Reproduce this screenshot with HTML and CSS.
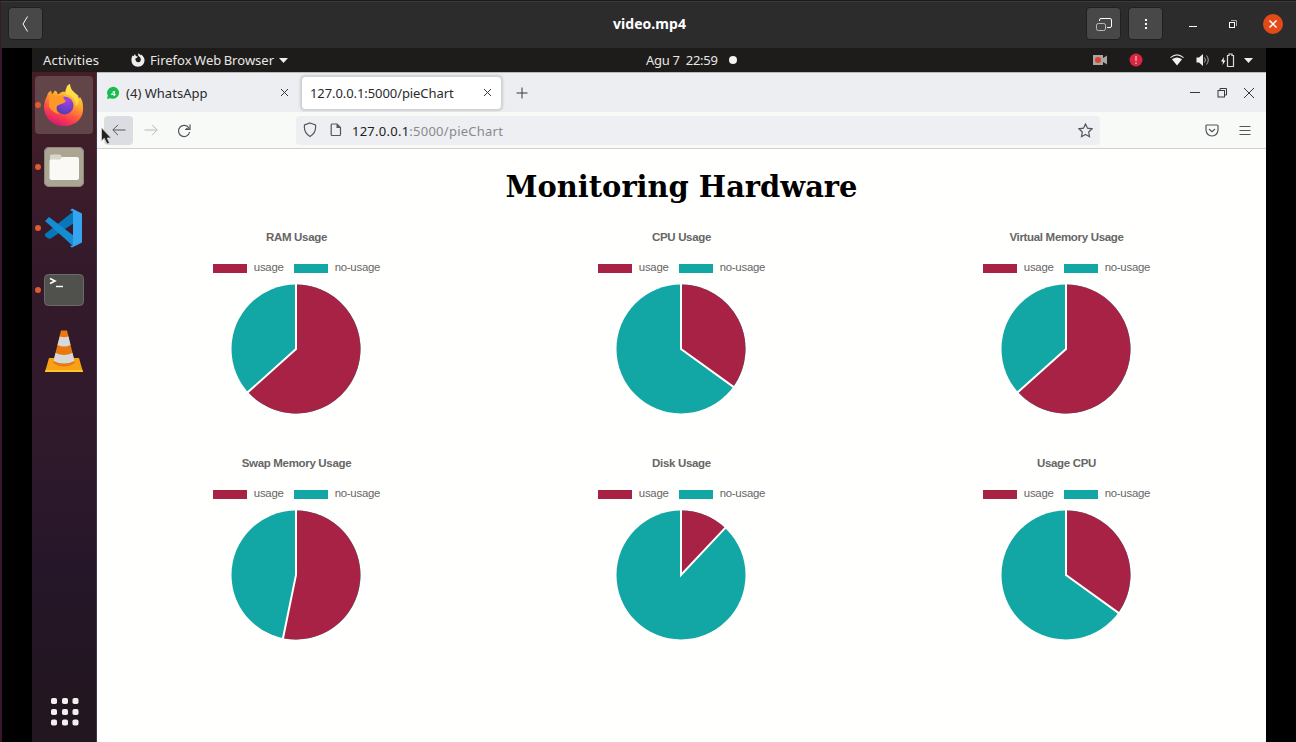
FILE: index.html
```html
<!DOCTYPE html>
<html lang="en">
<head>
<meta charset="utf-8">
<title>video.mp4</title>
<link rel="stylesheet" href="styles.css">
</head>
<body>
<div class="player">
  <header class="titlebar">
    <div class="title-left"><button class="tool" aria-label="Back"><svg width="33" height="32" viewBox="0 0 33 32"><path d="M18.500 8.500l-4.500 7.500 4.500 7.500" class="line light"/></svg></button></div>
    <div class="title">video.mp4</div>
    <div class="title-right">
      <button class="tool" aria-label="Picture in picture"><svg width="33" height="32" viewBox="0 0 33 32" class="line light"><path d="M12.500 13v-1q0-1.500 1.500-1.500h9q1.500 0 1.500 1.500v6q0 1.500-1.500 1.500h-3"/><rect x="9.500" y="15.500" width="9" height="7" rx="1.800" stroke="#bbb"/></svg></button>
      <button class="tool menu" aria-label="Menu"><svg width="33" height="32" viewBox="0 0 33 32" fill="#fff"><path d="M16 11h2v2h-2zM16 15h2v2h-2zM16 19h2v2h-2z"/></svg></button>
      <svg class="win-min" width="12" height="14"><path d="M2 9.500h8" class="line light"/></svg>
      <svg class="win-max" width="12" height="14" viewBox="0 0 12 14"><path d="M4 3.500h5.500V9" fill="none" stroke="#aaa"/><rect x="2.500" y="5.500" width="5" height="5" class="line light"/></svg>
      <svg class="win-close" width="20" height="20" viewBox="0 0 20 20"><circle cx="10" cy="10" r="10" fill="#e24a17"/><path d="M6.500 6.500l7 7m0-7l-7 7" stroke="#fff" stroke-width="1.500"/></svg>
    </div>
  </header>
  <div class="stage">
    <div class="desktop">
      <div class="topbar">
        <span class="activities">Activities</span>
        <svg class="app-icon" width="14" height="14" viewBox="0 0 14 14"><path d="M1.500 2.500l1 .7L4 1l.8 2 2.300.8-1.600 1.300-1.200.5Q4.500 9.500 7.500 9.300 10 8.800 9.800 6 9.500 4 7.300 2.700L7 .2Q9 1 9.600 2.200L10 1.500Q13.500 4 13.600 7.500 13 13.500 7 13.700.8 13.500.4 7.500.4 4.500 1.500 2.500z" fill="#eee"/></svg>
        <span class="app-name">Firefox Web Browser</span>
        <svg class="caret" width="9" height="5"><path d="M0 0h9l-4.500 5z" fill="#eee"/></svg>
        <span class="clock">Agu 7&nbsp; 22:59</span><span class="notice"></span>
        <div class="status">
          <svg width="14" height="10" viewBox="0 0 14 10"><path d="M0 0h10v3l4-2.500v9L10 7v3H0z" fill="#a9a5a1"/><circle cx="5" cy="5" r="3" fill="#dc4234"/></svg>
          <svg class="alert" width="14" height="14" viewBox="0 0 14 14"><circle cx="7" cy="7" r="6.500" fill="#d92742"/><path d="M7 3v5M7 9.500v1.500" stroke="#f3bdc4" stroke-width="1.300"/></svg>
          <svg class="wifi" width="14" height="12" viewBox="0 0 14 12"><path d="M.5 3.600Q7-1.800 13.500 3.600" fill="none" stroke="#ddd" stroke-width="1.200"/><path d="M2 5.200Q7 1.600 12 5.200L7 11.500z" fill="#f4f4f4"/></svg>
          <svg class="sound" width="14" height="12" viewBox="0 0 14 12"><path d="M.5 3.500H3L7 0v12L3 8.500H.5z" fill="#eee"/><path d="M8.500 3.500q2 2.500 0 5M10.500 1.500q3.500 4.500 0 9" fill="none" stroke="#aaa"/></svg>
          <svg class="battery" width="14" height="15" viewBox="0 0 14 15"><path d="M3 4L0 8.500h2L1.500 12 4.500 7.500h-2z" fill="#fff"/><path d="M6.500 2.500H8V1h3v1.500h1.500v11h-6z" fill="none" stroke="#ddd" stroke-width="1.200"/></svg>
          <svg width="9" height="5"><path d="M0 0h9l-4.500 5z" fill="#eee"/></svg>
        </div>
      </div>
      <div class="workspace">
        <nav class="dock">
          <div class="launcher active running"><svg width="42" height="44" viewBox="0 0 42 44">
            <defs><linearGradient id="fox" x1=".75" y1="0" x2=".3" y2="1"><stop offset="0" stop-color="#fff04b"/><stop offset=".4" stop-color="#ffa42a"/><stop offset=".72" stop-color="#ff4547"/><stop offset="1" stop-color="#d51476"/></linearGradient><radialGradient id="globe" cx=".65" cy=".2" r=".9"><stop offset="0" stop-color="#a641e7"/><stop offset="1" stop-color="#4a3dad"/></radialGradient></defs>
            <path d="M4 13Q5 9 8 7.500l1 4 3-4q2 .5 3 4 5-4 7-2.500l2-6q2-2 3-2 .3 5 4 8 3 3 4.500 7l1.500-2q3 4 3 10C41 35 33 43 21 43S1 34 1 23.500Q1 18 4 13z" fill="url(#fox)"/><circle cx="21.500" cy="22.500" r="9" fill="url(#globe)"/><path d="M6 15q5-4 10-1.500 2-2 5-1-1 2 0 3.500 3 2 0 4-4 1-7 3-2 5 3 8-7-1-11-7z" fill="#ff9829"/><path d="M26 3q-4 4-3 8 9 2 10 12 5-4 2-11-6-3-9-9z" fill="#ffe14d" opacity=".8"/></svg></div>
          <div class="launcher running"><svg width="42" height="42" viewBox="0 0 42 42"><rect x="1" y="1" width="40" height="40" rx="5" fill="#aaa693"/><rect x="1.500" y="1.500" width="39" height="39" rx="5" fill="none" stroke="#8c8879"/><path d="M7 14v-4q0-1.500 1.500-1.500H17l2.500 3H34l2 2z" fill="#d8d5c9"/><path d="M6.500 15q0-1.500 1.500-1.500h9l2.500-2.500H34q2 0 2 2v19q0 2-2 2H8.500q-2 0-2-2z" fill="#faf9f5"/></svg></div>
          <div class="launcher running"><svg width="42" height="42" viewBox="0 0 42 42"><path d="M2 27L31 4v12L7 32q-2 0-5-3z" fill="#0877b9"/><path d="M2 14l4-4 25 19-1 10z" fill="#168dd1"/><path d="M29 1.500l10 5v29l-10 5q-1 0-2-2 3 1 3-1V5q-.3-2-3-1z" fill="#35a5ef"/></svg></div>
          <div class="launcher running"><svg width="42" height="42" viewBox="0 0 42 42"><rect x="1.500" y="5.500" width="39" height="31" rx="4" fill="#50504d" stroke="#6c6b68"/><path d="M7 9.500l5 2.500-5 2.500" fill="none" stroke="#fff" stroke-width="1.600"/><path d="M13 17.500h7" stroke="#fff" stroke-width="1.400"/></svg></div>
          <div class="launcher"><svg width="42" height="44" viewBox="0 0 42 44"><path d="M6 29h30l4 14H2z" fill="#f7a116"/><path d="M2.500 41h37l.5 2H2z" fill="#ffc629"/><path d="M18 1.500h6L32 34q-11 7-22 0z" fill="#e9790e"/><path d="M16.800 7.500Q21 9 25.500 7.500L27.500 16Q21 19 14.500 16zM12.500 24Q21 28 29.500 24L31.500 32Q21 37 10.500 32z" fill="#d6d8d9"/></svg></div>
          <svg class="apps" width="30" height="30" viewBox="0 0 30 30" fill="#f3eff1"><g id="dots"><rect x="1" y="1" width="6" height="6" rx="1.800"/><rect x="12" y="1" width="6" height="6" rx="1.800"/><rect x="22.500" y="1" width="6" height="6" rx="1.800"/></g><use href="#dots" y="11"/><use href="#dots" y="21.500"/></svg>
        </nav>
        <main class="browser">
          <div class="tabs">
            <div class="tab"><svg width="14" height="14" viewBox="0 0 14 14"><path d="M1 13l.8-3.400a6 6 0 1 1 2.700 2.600z" fill="#1abc4c"/><text x="7.200" y="10.200" class="badge">4</text></svg><span class="tab-name whatsapp">(4) WhatsApp</span><svg class="close" width="9" height="9"><path d="M1 1l7 7M8 1L1 8" class="line dark"/></svg></div>
            <div class="tab selected"><span class="tab-name local">127.0.0.1:5000/pieChart</span><svg class="close" width="9" height="9"><path d="M1 1l7 7M8 1L1 8" class="line dark"/></svg></div>
            <svg class="plus" width="12" height="12"><path d="M6 .5v11M.5 6h11" class="line dark"/></svg>
            <div class="controls"><svg width="10" height="12"><path d="M0 5.500h10" class="line dark"/></svg><svg width="12" height="12" viewBox="0 0 12 12"><path d="M4 3V1.500h6.500V8H9" class="line dark"/><rect x="2" y="3.500" width="6.500" height="6.500" class="line dark"/></svg><svg width="12" height="12"><path d="M1 1l10 10M11 1L1 11" class="line dark"/></svg></div>
          </div>
          <div class="toolbar">
            <div class="back"><svg width="14" height="12"><path d="M13.500 6H1M6 .8L.8 6 6 11.200" class="line grey"/></svg></div>
            <svg class="forward" width="14" height="12"><path d="M.5 6H13M8 .8L13.200 6 8 11.200" class="line pale"/></svg>
            <svg class="reload" width="14" height="14" viewBox="0 0 14 14"><path d="M12 4.200A5.600 5.600 0 1 0 12.600 8" class="line grey thick"/><path d="M13 .5v5H8M12.500 5L9 4.500" class="line grey thick"/></svg>
            <div class="address"><svg class="shield" width="14" height="16" viewBox="0 0 14 16"><path d="M7 1l5.500 2Q13.500 10.500 7 14.500.5 10.500 1.500 3z" class="line grey thick"/></svg><svg class="page-icon" width="12" height="14" viewBox="0 0 12 14"><path d="M2 1h5l3.500 3.500v7q0 1-1 1H2q-.8 0-.8-1V2Q1.200 1 2 1z" class="line grey thick"/><path d="M6.500 1v4h4z" fill="#55555d"/></svg><span class="url"><b>127.0.0.1</b>:5000/pieChart</span><svg class="star" width="15" height="15" viewBox="0 0 15 15"><path d="M7.500 1l2 4.200 4.500.6-3.300 3.200.8 4.700-4-2.200-4 2.200.8-4.700L1 5.800l4.500-.6z" class="line grey thick"/></svg></div>
            <div class="actions"><svg width="14" height="13" viewBox="0 0 14 13"><path d="M2 1h10q1 0 1 1v4Q12.500 11.500 7 12 1.500 11.500 1 6V2q0-1 1-1zM4 5l3 2.800L10 5" class="line grey thick"/></svg><svg width="12" height="13"><path d="M.5 2.500h11M.5 6.500h11M.5 10.500h11" class="line grey"/></svg></div>
            <svg class="pointer" width="11" height="18" viewBox="0 0 11 18"><path d="M.5.800v13l2.800-2.500L6 17l2.500-1-2.300-5h4z" fill="#222" stroke="#d5d5d5" stroke-width=".8"/></svg>
          </div>
          <section class="page">
            <h1>Monitoring Hardware</h1>
            <div class="charts">
              <article class="chart"><h2>RAM Usage</h2><div class="legend"><i class="used"></i><span>usage</span><i class="free"></i><span>no-usage</span></div><svg class="pie" viewBox="-67 -67 134 134"><circle r="64.500"/><path class="slice" d="M0 0V-64.500A64.500 64.500 0 1 1-48 43.100z"/><path class="split" d="M0-66V0L-49.100 44.100"/></svg></article>
              <article class="chart"><h2>CPU Usage</h2><div class="legend"><i class="used"></i><span>usage</span><i class="free"></i><span>no-usage</span></div><svg class="pie" viewBox="-67 -67 134 134"><circle r="64.500"/><path class="slice" d="M0 0V-64.500A64.500 64.500 0 0 1 52.300 37.700z"/><path class="split" d="M0-66V0L53.500 38.600"/></svg></article>
              <article class="chart"><h2>Virtual Memory Usage</h2><div class="legend"><i class="used"></i><span>usage</span><i class="free"></i><span>no-usage</span></div><svg class="pie" viewBox="-67 -67 134 134"><circle r="64.500"/><path class="slice" d="M0 0V-64.500A64.500 64.500 0 1 1-48 43.100z"/><path class="split" d="M0-66V0L-49.100 44.100"/></svg></article>
              <article class="chart"><h2>Swap Memory Usage</h2><div class="legend"><i class="used"></i><span>usage</span><i class="free"></i><span>no-usage</span></div><svg class="pie" viewBox="-67 -67 134 134"><circle r="64.500"/><path class="slice" d="M0 0V-64.500A64.500 64.500 0 1 1-13 63.200z"/><path class="split" d="M0-66V0L-13.300 64.700"/></svg></article>
              <article class="chart"><h2>Disk Usage</h2><div class="legend"><i class="used"></i><span>usage</span><i class="free"></i><span>no-usage</span></div><svg class="pie" viewBox="-67 -67 134 134"><circle r="64.500"/><path class="slice" d="M0 0V-64.500A64.500 64.500 0 0 1 44.200-47z"/><path class="split" d="M0-66V0L45.200-48.100"/></svg></article>
              <article class="chart"><h2>Usage CPU</h2><div class="legend"><i class="used"></i><span>usage</span><i class="free"></i><span>no-usage</span></div><svg class="pie" viewBox="-67 -67 134 134"><circle r="64.500"/><path class="slice" d="M0 0V-64.500A64.500 64.500 0 0 1 52.300 37.700z"/><path class="split" d="M0-66V0L53.500 38.600"/></svg></article>
            </div>
          </section>
        </main>
      </div>
    </div>
  </div>
</div>
</body>
</html>
```
FILE: styles.css
```css
* { box-sizing: border-box; }
body { margin: 0; overflow: hidden; font: 13px "Noto Sans", "Open Sans", sans-serif; }
svg { display: block; flex: none; }
span { white-space: nowrap; }
.line { fill: none; stroke-width: 1; }
.light { stroke: #fff; }
.dark { stroke: #38383c; }
.grey { stroke: #55555d; }
.pale { stroke: #b7b8bb; }
.thick { stroke-width: 1.2; }
.player { width: 1296px; height: 742px; display: flex; flex-direction: column; background: #000; }
.titlebar { height: 48px; display: grid; grid-template-columns: 1fr auto 1fr; align-items: center; background: #2c2c2c; border-top: 1px solid #191919; box-shadow: inset 0 1px #3b3b3b; padding: 0 0 2px 2px; border-left: 1px solid #3b1c24; }
.title { color: #fff; font-weight: 700; font-size: 14px; letter-spacing: .05px; }
.title-left { padding-left: 7px; }
.title-right { display: flex; align-items: center; justify-content: flex-end; padding-right: 13px; }
.tool { display: block; width: 35px; height: 33px; padding: 0; border: 1px solid #202020; border-radius: 4px; background: #484848; }
.title-left .tool { margin-left: -2px; }
.menu { margin-left: 7px; }
.win-min { margin-left: 24px; }
.win-max { margin-left: 28px; }
.win-close { margin-left: 24px; }
.title-right .tool:first-child { margin-left: auto; }
.stage { flex: 1; min-height: 0; border-left: 2px solid #35182b; padding: 0 30px; display: flex; }
.desktop { flex: 1; display: flex; flex-direction: column; min-width: 0; }
.topbar { height: 24px; display: flex; align-items: center; background: #1d1c1a; color: #e8e7e5; padding: 0 13px 0 11px; }
.activities { width: 87px; letter-spacing: .2px; }
.app-icon { margin: 0 5px 0 1px; }
.app-name { width: 125px; letter-spacing: .02px; word-spacing: -1px; }
.caret { margin-left: 4px; }
.clock { margin-left: 358px; width: 73px; letter-spacing: -.3px; }
.notice { width: 8px; height: 8px; border-radius: 50%; background: #f3f3f3; margin-left: 10px; }
.status { display: flex; align-items: center; margin-left: auto; }
.alert { margin-left: 22px; }
.wifi { margin-left: 27px; }
.sound { margin-left: 12px; }
.battery { margin: 0 9px 0 11px; }
.workspace { flex: 1; min-height: 0; display: flex; }
.dock { width: 65px; padding: 4px 3px 0; display: flex; flex-direction: column; gap: 3px; background: linear-gradient(#451e28, #331a2b 30%, #311a2c 50%, #261629 75%, #21161e); border-right: 1px solid #44334a; }
.launcher { width: 58px; height: 58px; margin-bottom: .6px; border-radius: 4px; display: flex; align-items: center; justify-content: center; position: relative; }
.active { background: #624549; }
.running::before { content: ""; position: absolute; left: 0; top: 26px; width: 6px; height: 6px; border-radius: 50%; background: #dd5b2c; }
.apps { margin: auto 14px 15.5px 14.5px; }
.browser { flex: 1; min-width: 0; display: flex; flex-direction: column; background: #fff; }
.tabs { height: 40px; background: #edeef1; display: flex; align-items: center; padding-left: 9px; border-top: 1px solid #b9babc; }
.tab { height: 34px; display: flex; align-items: center; width: 192px; color: #292a2e; }
.badge { font: bold 8px "Liberation Sans", sans-serif; text-anchor: middle; fill: #fff; }
.whatsapp { margin-left: 6px; letter-spacing: .02px; }
.close { margin-left: auto; }
.tab:first-child { padding-right: 9.5px; }
.selected { width: 201px; margin-left: 3px; padding: 0 9.5px 0 8px; border: 1px solid #d1d2d5; border-radius: 4px; background: #fff; box-shadow: 0 0 3px #aaa; }
.local { letter-spacing: -.08px; }
.plus { margin-left: 13.500px; }
.controls { display: flex; align-items: center; gap: 15px; margin-left: auto; padding-right: 11px; }
.controls svg:first-child { margin-right: 1px; }
.toolbar { position: relative; height: 37px; display: flex; align-items: center; background: #f8faf8; border-bottom: 1px solid #cfd0d2; padding-left: 7px; }
.back { width: 29px; height: 29px; background: #dcdde2; border-radius: 4px; display: flex; align-items: center; justify-content: center; }
.forward { margin-left: 11px; }
.reload { margin-left: 18.500px; margin-top: 1px; }
.address { width: 804px; height: 29px; margin-left: 105.500px; display: flex; align-items: center; border-radius: 4px; background: #eeeff2; padding: 0 7px; color: #88898c; }
.page-icon { margin-left: 13px; }
.url { margin-left: 10px; letter-spacing: .25px; padding-top: 1px; }
.url b { color: #202124; font-weight: 400; }
.star { margin-left: auto; }
.actions { display: flex; align-items: center; gap: 20px; margin-left: auto; padding-right: 15.500px; }
.pointer { position: absolute; left: 4px; top: 15px; }
.page { flex: 1; background: #fffffd; padding: 18px 7px 0; }
h1 { margin: 0; height: 40px; text-align: center; color: #000; font: bold 28.9px/40px "DejaVu Serif", serif; white-space: nowrap; }
.charts { display: grid; grid-template-columns: repeat(3, 385px); grid-auto-rows: 226px; }
.chart { display: flex; flex-direction: column; align-items: center; padding-top: 22px; font-family: "Liberation Sans", Arial, sans-serif; color: #666; }
h2 { margin: 0; font-size: 11.5px; letter-spacing: -.32px; line-height: 16px; font-weight: 700; }
.legend { height: 12px; margin-top: 16px; display: flex; align-items: center; font-size: 11.4px; letter-spacing: -.25px; line-height: 12px; }
.legend i { width: 34.5px; height: 9px; margin: 3px 6.5px 0 0; background: #a82246; }
.legend .free { background: #12a6a4; margin-left: 10px; }
.pie { width: 134px; height: 134px; margin: 8.7px 1px 0 0; fill: #12a6a4; }
.slice { fill: #a82246; }
.split { fill: none; stroke: #fffffd; stroke-width: 2; }
```
